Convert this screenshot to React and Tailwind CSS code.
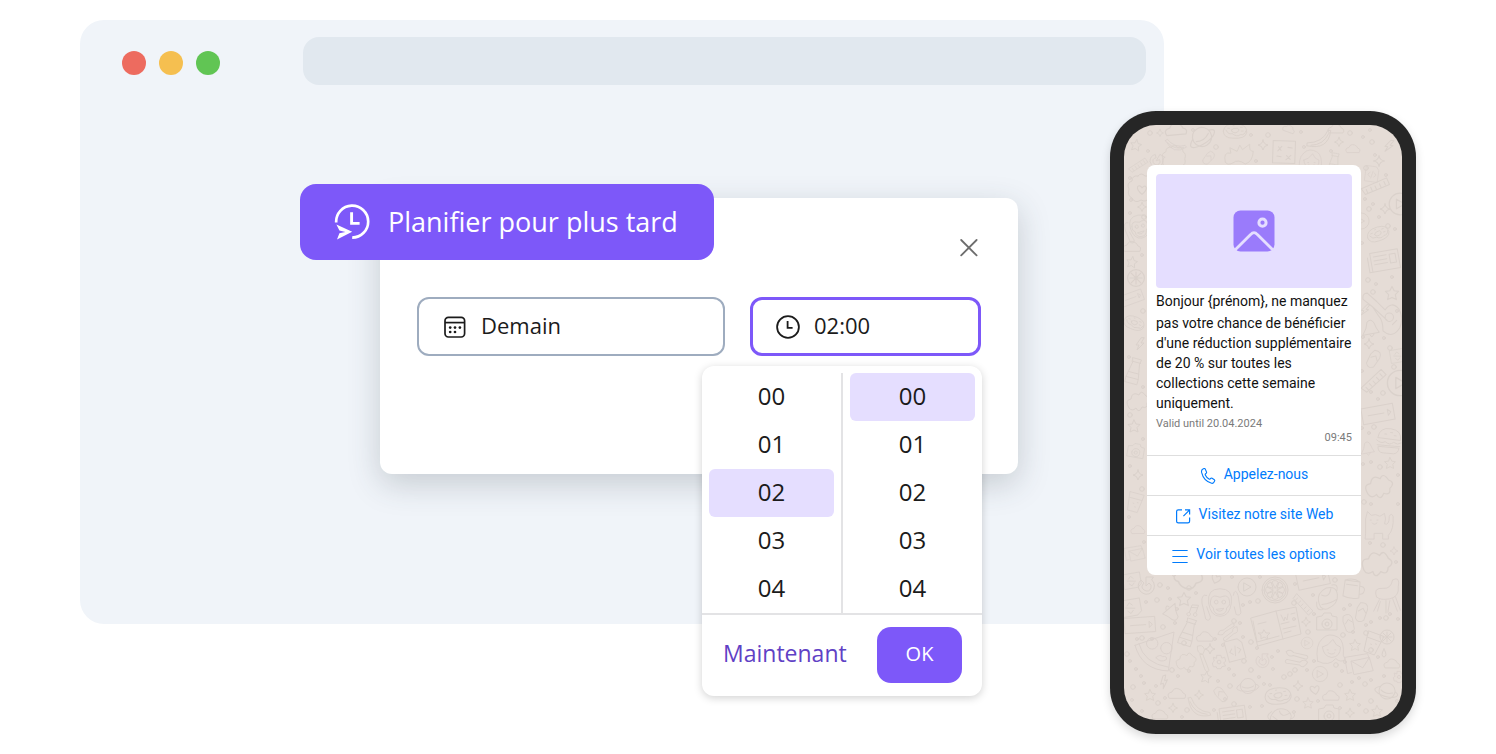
import React, { useState } from "react";

const DOODLES = {
  star: "M0-6 L2-2 L6-1.5 L3 1.5 L4 6 L0 4 L-4 6 L-3 1.5 L-6-1.5 L-2-2Z",
  spark: "M0-5 Q.6-.6 5 0 Q.6.6 0 5 Q-.6.6-5 0 Q-.6-.6 0-5Z",
  cloud: "M-8 4 Q-11-1-5-2 Q-3-7 2-5 Q5-4 6-1 Q10 0 8 4Z",
  bolt: "M1-6 L-4 1 L-1 1 L-3 6 L4-1 L1-1 L4-6Z",
  heart: "M0 4 Q-5 0-4-3 Q-2-5 0-2 Q3-5 4-2 Q4 1 0 4Z",
  drop: "M0-4 Q4 3 0 4 Q-4 3 0-4Z",
  orange: "M-13 0a13 13 0 1 0 26 0a13 13 0 1 0-26 0M-11 0a11 11 0 1 0 22 0a11 11 0 1 0-22 0M0-2 L-3-8 Q0-11 3-8Z M0 2 L-3 8 Q0 11 3 8Z M2 0 L8-3 Q11 0 8 3Z M-2 0 L-8-3 Q-11 0-8 3Z M2-2 L4-8 Q8-7 8-4Z M-2-2 L-4-8 Q-8-7-8-4Z M2 2 L4 8 Q8 7 8 4Z M-2 2 L-4 8 Q-8 7-8 4Z",
  lime: "M-7 0a7 7 0 1 0 14 0a7 7 0 1 0-14 0M-5 0H5M0-5V5M-4-4 L4 4M4-4 L-4 4",
  play: "M-9 0a9 9 0 1 0 18 0a9 9 0 1 0-18 0M-3-4 L4 0 L-3 4Z",
  monkey: "M-12 0 Q-14-15 0-15 Q14-15 12 0 Q10 14 0 14 Q-10 14-12 0M-10-2 Q-9-9-3-7 Q0-5 3-7 Q9-9 10-2 Q11 3 7 5 Q7 12 0 12 Q-7 12-7 5 Q-11 3-10-2M-6-1a2 2 0 1 0 4 0a2 2 0 1 0-4 0M2-1a2 2 0 1 0 4 0a2 2 0 1 0-4 0M-4 7 Q0 11 4 6Z M-14-8 Q-20-10-19 0 L-15 17 Q-11 20-10 15 L-14 4M14-8 Q16-17 19-8 L22 10 Q21 14 17 12 L15 4",
  book: "M-25-6 L0-13 L20-17 L25 10 L3 16 L-18 22Z M0-13 L7 15 M-23-3 L-19 18 L3 12 M5-9 L8-3 L9-7 L11-4 L12-10 M15-10 L19-11 M5 0 L13-2 M7 5 L20 2 M8 9 L15 7 M-18 0 L-10-2 M-12 6 L-10 9 L-6 9 L-9 12 L-8 15 L-12 13 L-15 15 L-15 11 L-18 9 L-14 9Z",
  pizza: "M-21-6 L20-20 L14 21 Q-14 20-21-6ZM-17-8 Q-12 13 14 17M-9-8a6 6 0 1 0 12 0a6 6 0 1 0-12 0M6-3a6 6 0 1 0 12 0a6 6 0 1 0-12 0M1 7 Q5 3 8 6 Q13 5 12 9 Q6 13 1 7",
  cat: "M-11 12 V-3 L-9-11 L-5-7 Q0-9 4-6 L9-9 Q11-3 9 2 Q14 4 14-6 Q16-10 18-6 Q19 8 13 14 L13 18 H7 V12 H-2 V18 H-11ZM-6-2 h1M1-2 h1M-4 1 Q-2 4 1 1",
  burger: "M-12-3 Q-11-14 1-13 Q13-12 12-2Z M-13 0 Q-8 4-4 1 Q1 5 5 1 Q9 4 13 1M-12 5 H12M-11 7 Q-11 13-5 13 H6 Q11 12 11 7Z M-5-7h2M1-9h2M5-6h2",
  girl: "M-14 14 Q-17-3-9-10 Q-2-17 8-11 Q14-7 13 8 L15 12 Q10 16 5 11 Q-2 20-14 14M-9-1 Q-3-2 2-9 Q5-2 10-1 Q10 9 1 10 Q-8 9-9-1M-4 2h1M4 2h1M-3 5 Q1 8 4 5",
  camera: "M-10-5 L-5-6 L-3-9 H4 L5-6 L10-5 V8 H-10Z M-5 2a5 5 0 1 0 10 0a5 5 0 1 0-10 0M-2 2a2 2 0 1 0 4 0a2 2 0 1 0-4 0",
  planet: "M-8 0a8 8 0 1 0 16 0a8 8 0 1 0-16 0M-8-2 Q-16 3-8 5 Q0 7 8 4 Q15 0 8-2M-6 1 Q0 4 6 0",
  donut: "M-13 0 Q-12-9 2-8 Q14-7 13 2 Q11 9-2 8 Q-13 8-13 0M-4-1 Q-2-4 3-3 Q6 0 1 2 Q-4 2-4-1M-10-1 Q-8 4-3 3 Q2 7 6 4 Q11 5 12 0M-8-3h2M6-4h2M7 0h2M-2-6h1",
  bottle: "M-5-14 H5 L4-9 L7 8 V14 H-7 V8 L-4-9Z M-5-10H5M-6 2H6M-7 8H7",
  file: "M-9-11 H5 L9-6 V11 H-9Z M-3-2 L-6 1 L-3 4M3-2 L6 1 L3 4M1-4 L-1 6",
  gear: "M-2-7 H2 L3-4 L6-5 L7-1 L5 1 L7 4 L3 5 L2 7 H-2 L-3 5 L-6 5 L-7 1 L-5-1 L-6-5 L-3-4Z M-2 0a2 2 0 1 0 4 0a2 2 0 1 0-4 0",
  brush: "M-4-13 Q2-16 4-9 L2-4 Q-5-5-4-13M-1-4 L2-4 L9 14 Q6 17 4 12Z",
  banana: "M-12-11 L-9-12 Q-3 4 12 5 L13 8 Q-9 13-12-11M-10-7 Q-5 6 9 7",
  news: "M-14-9 H14 V10 H-14Z M-11-5H2M-11-1H2M-11 3H2M5-5H11V4H5Z M-17-5 V10 H-14",
  flop: "M-4-9 Q4-12 5-4 L4 8 Q-1 13-5 8 L-6-3ZM-4 0 L0-4 L4 0",
  mug: "M-8-8 H7 L8 8 Q0 11-8 8ZM8-4 Q14-4 12 2 Q11 4 8 4M-8-8 Q0-12 7-8M-6-4H5",
  chair: "M-10 2 Q-14-8-3-7 Q5-6 7-16 Q15-20 13-9 Q14 2 4 4 Q-6 6-10 2M-7 5 L-13 17M0 6 V19M7 4 L12 17M-6 7 L-9 17M4 6 L2 18M10 2 L15 16",
  letter: "M-14-8 L10-12 L12-6M-14-8 L-11 9 L-7 8M-7-4 L12-8 L16 6 L-4 10Z M-7-4 L5 3 L12-8",
  card: "M-16-8 H16 V8 H-16Z M-10 0H6M10-3 L13 0 L10 3Z",
  guitar: "M-15-18 L-6-10 L2-2 Q8-11 15-3 Q20 5 16 15 Q9 26 0 18 Q0 8-4 4 L-10-5M-15-18 Q-20-18-19-12 L-10-5 L4 8M2 5a4 4 0 1 0 8 0a4 4 0 1 0-8 0M9 12 L13 8",
  bell: "M-7 6 Q-3-1-3-7 Q1-11 4-6 Q6-1 9 3ZM0 6 Q2 10 4 5",
  croissant: "M-10 6 Q-12-8 2-10 Q12-9 10 0 Q8 9-4 10 Q-8 10-10 6M-5-5 Q1 1 6-8M-8 4 Q2 6 8 4M-12 0 Q-16 8-9 9M11-4 Q15-10 8-11",
  spoon: "M-12-3 Q-8-7-4-3 L10-2 Q13 0 10 2 L-4 0 Q-9 3-12-3M12 5 Q8 1 4 6 L-10 5 Q-13 7-10 9 L4 9 Q9 13 12 5",
  ghost: "M-9 7 Q-14-1-7-2 Q-6-10 1-6 Q3-12 8-5 Q14-3 9 2 Q10 8 4 6 Q1 13-2 7 Q-6 11-9 7",
  flame: "M-14 8 Q-17-4-8-2 L-9-8 L-1-4 L2-11 L5-6 L13-12 Q12-4 17-4 Q16 8 8 10 Q0 4-6 9 Q-12 12-14 8",
  dice: "M-12-9 L9-12 L12 9 L-9 12ZM-6-4 L-3-1M-3-5 L-6 0M3-5 H7M-6 5H-2M3 3 L7 6M7 2 L3 7",
  badge: "M-3-13 Q0-17 4-13 Q10-14 10-8 Q14-6 12 0 Q14 6 8 8 Q6 14 0 11 Q-6 15-9 9 Q-14 7-12 0 Q-15-6-9-8 Q-9-14-3-13",
  comb: "M-13 5 L10-10 L14-4 L-8 10ZM-8 5 L-6 8M-4 2 L-2 5M0 0 L2 3M4-3 L6 0M8-6 L10-3",
  note: "M-3 4 a2 2 0 1 0 .1 0 V-5 L4-7 V2 a2 2 0 1 0 .1 0M-3-2 L4-4",
  cup: "M-9-11 H9 L6 12 H-6Z M-8-4H8M-2 2h1M3 0h1M1 6h1",
  refresh: "M5-6 Q10 0 5 6 Q-1 11-7 5 Q-11-1-6-6 L-3-3 Q-7 1-3 4 Q2 7 4 2 Q5-1 2-3 L-1 0 V-9 H6Z",
};

// [shape, x, y, rotation, scale]
const PLACED = [
  ["star", 12, 20, 10, 0.9], ["spark", 36, 8, 0, 0.7], ["cloud", 52, 5, -5, 1.2], ["banana", 52, 20, -20, 0.7],
  ["planet", 78, 12, -30, 1.2], ["donut", 111, 6, 0, 0.9], ["flame", 114, 30, 0, 0.9], ["spark", 139, 20, 0, 1],
  ["banana", 196, 14, -70, 0.9], ["dice", 160, 27, 10, 1.05], ["cloud", 165, 4, 20, 0.7], ["spark", 215, 17, 0, 0.9],
  ["cloud", 212, 4, 0, 0.9], ["cloud", 229, 24, 0, 0.8], ["bolt", 265, 21, 10, 1], ["badge", 50, 34, 0, 0.9],
  ["flop", 85, 33, 40, 0.7], ["comb", 14, 40, 0, 0.7], ["refresh", 33, 36, 30, 0.8], ["girl", 187, 36, 0, 0.8],
  ["bottle", 210, 38, 10, 0.7], ["spark", 255, 36, 0, 1.1], ["badge", 17, 64, 0, 1], ["heart", 18, 65, 0, 1.1],
  ["spark", 18, 82, 0, 0.9], ["monkey", 16, 102, -10, 0.8], ["cloud", 8, 122, 0, 1], ["star", 8, 137, 10, 0.9],
  ["lime", 12, 153, 0, 1.2], ["card", 8, 173, -20, 0.7], ["donut", 10, 198, 20, 0.8], ["bolt", 16, 219, 0, 1],
  ["bottle", 10, 246, 15, 0.9], ["ghost", 14, 276, 0, 1], ["star", 10, 301, 0, 1], ["camera", 12, 326, 10, 0.8],
  ["spark", 14, 350, 0, 1], ["cup", 11, 377, 15, 0.8], ["cloud", 14, 405, 0, 0.8], ["letter", 10, 429, 0, 0.7],
  ["comb", 251, 61, 10, 1], ["file", 248, 49, 8, 0.7], ["spark", 261, 84, 0, 1], ["play", 276, 79, 0, 1.2],
  ["play", 237, 96, 0, 0.9], ["donut", 254, 109, -20, 0.85], ["news", 261, 135, -10, 1], ["star", 268, 168, 0, 1.1],
  ["guitar", 259, 187, 0, 1.05], ["bolt", 241, 185, 10, 0.9], ["bell", 246, 204, 0, 1], ["spark", 245, 219, 0, 1],
  ["flop", 250, 234, 30, 0.9], ["file", 274, 231, 80, 0.7], ["comb", 249, 256, -10, 1], ["play", 276, 258, 0, 1.4],
  ["card", 254, 289, -10, 1], ["burger", 265, 316, 5, 0.95], ["bell", 243, 324, 0, 0.8], ["star", 266, 338, 0, 0.9],
  ["ghost", 255, 361, 0, 1.2], ["cat", 252, 397, 0, 0.95], ["spark", 270, 426, 0, 0.8], ["ghost", 253, 438, 10, 1.3],
  ["file", 8, 456, 80, 0.8], ["refresh", 23, 461, 0, 1], ["cloud", 64, 455, 180, 1.6], ["heart", 92, 454, 20, 1.1],
  ["star", 60, 474, 0, 1.1], ["monkey", 96, 478, 0, 0.95], ["play", 123, 462, 0, 1], ["orange", 151, 465, 0, 1],
  ["card", 189, 454, -12, 1], ["croissant", 204, 473, -20, 1], ["mug", 228, 464, 8, 1], ["chair", 262, 470, 0, 0.95],
  ["bell", 48, 487, 150, 1], ["note", 69, 485, 20, 0.9], ["file", 7, 483, 80, 0.9], ["card", 16, 500, -4, 0.95],
  ["bottle", 64, 507, 18, 0.95], ["pizza", 31, 526, 0, 0.95], ["cloud", 81, 512, 0, 0.95], ["spoon", 103, 505, -40, 0.8],
  ["book", 152, 499, 0, 1], ["comb", 179, 479, 80, 0.85], ["spark", 182, 497, 0, 0.9], ["camera", 203, 497, 0, 1],
  ["flop", 225, 498, -15, 0.9], ["flop", 238, 487, 15, 0.95], ["file", 111, 525, -15, 0.95], ["spark", 86, 524, 0, 1],
  ["brush", 77, 533, 0, 0.9], ["ghost", 62, 536, 0, 0.9], ["gear", 95, 537, 0, 0.95], ["refresh", 139, 536, 0, 0.8],
  ["play", 183, 518, 0, 0.65], ["girl", 207, 523, 0, 0.95], ["star", 231, 520, 0, 0.9], ["cup", 249, 518, 20, 0.9],
  ["lime", 263, 512, 0, 1], ["drop", 260, 528, 0, 1], ["spoon", 173, 531, 8, 0.95], ["letter", 234, 540, 0, 0.95],
  ["cloud", 268, 539, 0, 0.9], ["play", 196, 549, 0, 0.85], ["star", 82, 552, 10, 0.9], ["bolt", 40, 557, -20, 1],
  ["planet", 124, 561, 0, 0.95], ["cloud", 53, 569, 0, 1], ["spark", 75, 570, 0, 0.9], ["flop", 97, 569, -40, 0.8],
  ["donut", 154, 571, -5, 1], ["spark", 174, 561, 0, 1], ["heart", 191, 565, -10, 1.1], ["cloud", 207, 571, 0, 0.95],
  ["star", 226, 570, 0, 0.9], ["planet", 263, 566, 20, 1], ["star", 26, 570, 0, 0.9], ["banana", 75, 583, 0, 0.9],
  ["spark", 49, 583, 0, 0.9], ["news", 109, 590, -8, 0.9], ["cloud", 36, 590, 0, 0.9], ["camera", 205, 589, 0, 1],
  ["star", 184, 578, 0, 0.85], ["spark", 226, 588, 0, 0.9], ["star", 253, 586, 0, 0.9], ["croissant", 157, 592, 30, 0.9],
  ["gear", 275, 552, 0, 0.8],
];

const DOTS = [
  [26, 8], [24, 26], [69, 5], [92, 22], [127, 10], [132, 36], [144, 10], [177, 7], [180, 22], [226, 8], [239, 12],
  [246, 5], [248, 17], [251, 30], [207, 26], [40, 50], [6, 53], [7, 75], [20, 92], [6, 88], [18, 130], [19, 186],
  [5, 232], [19, 262], [6, 290], [19, 314], [6, 341], [18, 364], [5, 392], [20, 417], [242, 43], [262, 50], [241, 74],
  [245, 84], [249, 79], [255, 92], [264, 101], [238, 118], [271, 104], [244, 155], [252, 159], [268, 152], [249, 167],
  [273, 186], [260, 213], [266, 223], [239, 212], [238, 246], [270, 242], [254, 274], [247, 267], [259, 268], [238, 303],
  [245, 308], [250, 302], [239, 339], [247, 337], [256, 342], [274, 350], [247, 379], [240, 377], [274, 379], [246, 418],
  [259, 420], [272, 437], [44, 463], [36, 460], [50, 450], [72, 468], [65, 463], [108, 452], [136, 452], [134, 476],
  [119, 480], [126, 477], [110, 496], [116, 498], [22, 477], [33, 475], [46, 474], [53, 484], [39, 502], [51, 498],
  [13, 514], [18, 513], [28, 514], [6, 536], [3, 529], [17, 551], [12, 544], [9, 562], [20, 558], [32, 561], [48, 545],
  [54, 551], [65, 546], [60, 518], [91, 514], [99, 520], [127, 517], [119, 512], [133, 523], [127, 545], [105, 544],
  [110, 550], [120, 536], [135, 552], [149, 544], [160, 552], [148, 532], [154, 526], [166, 549], [140, 559], [146, 560],
  [106, 561], [94, 556], [101, 574], [110, 579], [126, 582], [90, 585], [63, 585], [58, 592], [41, 573], [34, 578],
  [8, 575], [18, 586], [170, 478], [171, 459], [170, 494], [184, 507], [190, 489], [189, 470], [211, 455], [220, 484],
  [226, 480], [219, 510], [242, 500], [247, 497], [242, 508], [229, 507], [256, 493], [262, 493], [266, 489], [274, 494],
  [171, 545], [183, 545], [190, 536], [212, 540], [218, 546], [221, 537], [216, 560], [228, 557], [235, 553], [241, 559],
  [247, 555], [260, 551], [247, 576], [273, 576], [235, 580], [242, 586], [216, 583], [194, 576], [173, 574], [170, 587],
  [138, 581], [247, 525], [254, 532],
];

function Wallpaper() {
  return (
    <svg
      className="absolute inset-0 h-full w-full"
      viewBox="0 0 278 595"
      preserveAspectRatio="xMidYMid slice"
      fill="none"
      stroke="#dad1cb"
      strokeLinecap="round"
      strokeLinejoin="round"
      aria-hidden="true"
    >
      {PLACED.map(([name, x, y, r, s], i) => (
        <path key={i} d={DOODLES[name]} transform={`translate(${x} ${y}) rotate(${r}) scale(${s})`} strokeWidth="1" />
      ))}
      {DOTS.map(([x, y], i) => (
        <circle key={i} cx={x} cy={y} r={i % 3 === 0 ? 2.3 : 1.4} strokeWidth="1" />
      ))}
    </svg>
  );
}

function ScheduleIcon() {
  return (
    <svg className="h-9 w-9 shrink-0" viewBox="0 0 36 36" fill="none" stroke="currentColor" aria-hidden="true">
      <path d="M2.2 18.5A16 16 0 1 1 18.2 33.6" strokeWidth="2.7" />
      <path d="M17.6 8.2V19.4H25.6" strokeWidth="2.9" />
      <path d="M2.4 20.4 18.2 27.7 3 35.4 5.4 29.3 11.4 27.9 5.4 26.4Z" fill="currentColor" stroke="none" />
    </svg>
  );
}

function CalendarIcon() {
  return (
    <svg className="h-6 w-6 shrink-0" viewBox="0 0 24 24" fill="none" stroke="currentColor" aria-hidden="true">
      <rect x="2" y="2.4" width="19.6" height="19.6" rx="3.4" strokeWidth="1.7" />
      <path d="M2 7.6H21.6" strokeWidth="1.7" />
      <g fill="currentColor" stroke="none">
        <circle cx="7.2" cy="12.6" r="1.35" />
        <circle cx="12" cy="12.6" r="1.35" />
        <circle cx="16.9" cy="12.6" r="1.35" />
        <circle cx="7.2" cy="17" r="1.35" />
        <circle cx="12" cy="17" r="1.35" />
      </g>
    </svg>
  );
}

function ClockIcon() {
  return (
    <svg className="h-6 w-6 shrink-0" viewBox="0 0 24 24" fill="none" stroke="currentColor" strokeWidth="1.8" aria-hidden="true">
      <circle cx="12" cy="12" r="10.9" />
      <path d="M11.6 6V12.8H16.6" />
    </svg>
  );
}

function PictureIcon() {
  return (
    <svg className="h-[42px] w-[42px]" viewBox="0 0 42 42" fill="none" aria-hidden="true">
      <rect x="0.5" y="0.5" width="41" height="41" rx="7" fill="#9a7bfb" />
      <circle cx="29.5" cy="12.7" r="3.6" stroke="#e5deff" strokeWidth="3" />
      <path d="M1 41 17.6 24.6Q21 20.6 24.4 24.6L41 41" stroke="#e5deff" strokeWidth="2.8" />
      <path d="M0 38.6V42H4.4L2.6 41Z M42 38.6V42H37.6L39.4 41Z" fill="#e5deff" />
    </svg>
  );
}

function PhoneIcon() {
  return (
    <svg className="h-4 w-4 shrink-0" viewBox="0 0 16 16" fill="none" stroke="currentColor" strokeWidth="1.1" strokeLinejoin="round" aria-hidden="true">
      <path d="M2.6 1.2 4 .6Q4.8.3 5.2 1.1L6.5 3.9Q6.8 4.6 6.3 5.1L5.4 6Q5 6.4 5.3 7Q6.6 9.7 9 11.1Q9.6 11.4 10 11L11 10.2Q11.5 9.8 12.1 10.2L14.4 11.8Q15 12.3 14.6 13L13.9 14.3Q13.2 15.7 11.6 15.3Q3.6 13 1.6 4.4Q1.2 2 2.6 1.2Z" />
    </svg>
  );
}

function ExternalIcon() {
  return (
    <svg className="h-4 w-4 shrink-0" viewBox="0 0 16 16" fill="none" stroke="currentColor" strokeWidth="1.2" aria-hidden="true">
      <path d="M7 1.9H3.3Q1.6 1.9 1.6 3.6V13.2Q1.6 14.9 3.3 14.9H12.9Q14.6 14.9 14.6 13.2V9.4" />
      <path d="M10 1.9H14.6V6.6M14.4 2.1 8.4 8.1" />
    </svg>
  );
}

function ListIcon() {
  return (
    <svg className="h-4 w-4 shrink-0" viewBox="0 0 16 16" fill="none" stroke="currentColor" strokeWidth="1.2" strokeLinecap="round" aria-hidden="true">
      <path d="M.8 2.5H15.2M.8 8.5H15.2M.8 14.5H15.2" />
    </svg>
  );
}

const VALUES = ["00", "01", "02", "03", "04"];

function Column({ label, value, onChange }) {
  return (
    <div role="group" aria-label={label} className="flex-1 px-[7px]">
      {VALUES.map((v) => (
        <button
          key={v}
          type="button"
          aria-pressed={v === value}
          onClick={() => onChange(v)}
          className={"flex h-12 w-full items-center justify-center rounded-md pb-[3px] text-2xl text-[#1b1b1b] " + (v === value ? "bg-[#e5deff]" : "")}
        >
          {v}
        </button>
      ))}
    </div>
  );
}

function TimePicker({ hour, minute, onHour, onMinute }) {
  return (
    <div className="absolute -right-px top-[69px] w-[280px] rounded-xl bg-white shadow-[0_2px_8px_rgba(0,0,0,0.18)]">
      <div className="flex pt-[7px]">
        <Column label="Heures" value={hour} onChange={onHour} />
        <div className="w-0.5 bg-[#e3e3e5]" />
        <Column label="Minutes" value={minute} onChange={onMinute} />
      </div>
      <div className="flex items-center justify-between border-t-2 border-[#e3e3e5] pb-[13px] pl-[21px] pr-5 pt-3">
        <button type="button" className="pb-[3px] text-[23px] font-medium text-[#5f41c5]">Maintenant</button>
        <button type="button" className="h-14 w-[85px] rounded-[14px] bg-[#7d58f9] pb-[3px] text-xl text-white">OK</button>
      </div>
    </div>
  );
}

function ScheduleDialog() {
  const [hour, setHour] = useState("02");
  const [minute, setMinute] = useState("00");
  const [day, setDay] = useState("Demain");
  return (
    <form className="relative ml-[300px] mr-[146px] mt-[113px] rounded-xl bg-white px-[37px] pb-[118px] pt-[38px] shadow-[0_10px_32px_rgba(50,65,75,0.22)]">
      <h1 className="absolute -left-20 -top-3.5 flex h-[76px] w-[414px] items-center gap-[18px] rounded-2xl bg-[#7d58f9] pl-[34px] text-[27px] font-medium text-white">
        <ScheduleIcon />
        <span className="whitespace-nowrap">Planifier pour plus tard</span>
      </h1>
      <div className="flex justify-end">
        <button type="button" aria-label="Fermer" className="text-[#6d6d6d]">
          <svg className="h-6 w-6" viewBox="0 0 24 24" fill="none" stroke="currentColor" strokeWidth="1.8" strokeLinecap="round">
            <path d="M4.2 4 19.6 19.4M19.6 4 4.2 19.4" />
          </svg>
        </button>
      </div>
      <div className="mt-[37px] grid grid-cols-[4fr_3fr] gap-[25px]">
        <label className="flex h-[59px] min-w-0 items-center gap-[14px] rounded-xl border-2 border-[#9eacbf] pl-6 text-[#1b1b1b]">
          <CalendarIcon />
          <input aria-label="Date" className="w-full min-w-0 bg-transparent pb-0.5 text-[22px] outline-none" value={day} onChange={(e) => setDay(e.target.value)} />
        </label>
        <div className="relative min-w-0">
          <label className="flex h-[59px] items-center gap-[14px] rounded-xl border-3 border-[#7d58f9] pl-[23px] text-[#1b1b1b]">
            <ClockIcon />
            <input aria-label="Heure" className="w-full min-w-0 bg-transparent pb-0.5 text-[22px] outline-none" value={`${hour}:${minute}`} readOnly />
          </label>
          <TimePicker hour={hour} minute={minute} onHour={setHour} onMinute={setMinute} />
        </div>
      </div>
    </form>
  );
}

function BrowserWindow() {
  return (
    <section className="min-w-0 flex-1 rounded-3xl bg-[#f0f4f9] pb-[150px] pt-[17px]">
      <div className="flex items-center pl-[42px] pr-[18px]">
        <div className="flex gap-[13px] pt-1">
          <span className="h-6 w-6 rounded-full bg-[#ed6b5f]" />
          <span className="h-6 w-6 rounded-full bg-[#f5bf50]" />
          <span className="h-6 w-6 rounded-full bg-[#61c554]" />
        </div>
        <div className="ml-[83px] h-12 flex-1 rounded-2xl bg-[#e1e8ef]" />
      </div>
      <ScheduleDialog />
    </section>
  );
}

function Action({ icon, children }) {
  return (
    <a href="#" className="flex h-10 items-center justify-center gap-2 border-t border-[#dedede] text-sm text-[#007bfc]">
      {icon}
      <span className="whitespace-nowrap pb-1">{children}</span>
    </a>
  );
}

function Phone() {
  return (
    <section className="relative -ml-[54px] mt-[91px] min-h-[623px] w-[306px] shrink-0 overflow-hidden rounded-[46px] bg-[#262626] p-[14px] font-[Roboto,sans-serif] shadow-[0_4px_10px_rgba(0,0,0,0.15)]">
      <div className="relative min-h-[595px] overflow-hidden rounded-[32px] bg-[#e5dcd6] pl-[23px] pr-[41px] pt-10">
        <Wallpaper />
        <article className="relative rounded-lg bg-white pt-[9px]">
          <div className="px-[9px] pb-[10px]">
            <div className="flex h-[114px] items-center justify-center rounded bg-[#e5deff]">
              <PictureIcon />
            </div>
            <p className="mt-[3px] text-sm text-[#111111]">
              <span className="mb-0.5 block">Bonjour {"{prénom}"}, ne manquez</span>
              pas votre chance de bénéficier d'une réduction supplémentaire de 20 % sur toutes les collections cette semaine uniquement.
            </p>
            <p className="mt-1 text-[11px] leading-[14px] text-[#7a7a7a]">Valid until 20.04.2024</p>
            <p className="text-right text-[11px] leading-[14px] text-[#7a7a7a]">09:45</p>
          </div>
          <Action icon={<PhoneIcon />}>Appelez-nous</Action>
          <Action icon={<ExternalIcon />}>Visitez notre site Web</Action>
          <Action icon={<ListIcon />}>Voir toutes les options</Action>
        </article>
      </div>
    </section>
  );
}

export default function App() {
  return (
    <main className="flex min-h-screen items-start bg-white px-20 pb-5 pt-5 font-['Open_Sans',sans-serif]">
      <BrowserWindow />
      <Phone />
    </main>
  );
}
